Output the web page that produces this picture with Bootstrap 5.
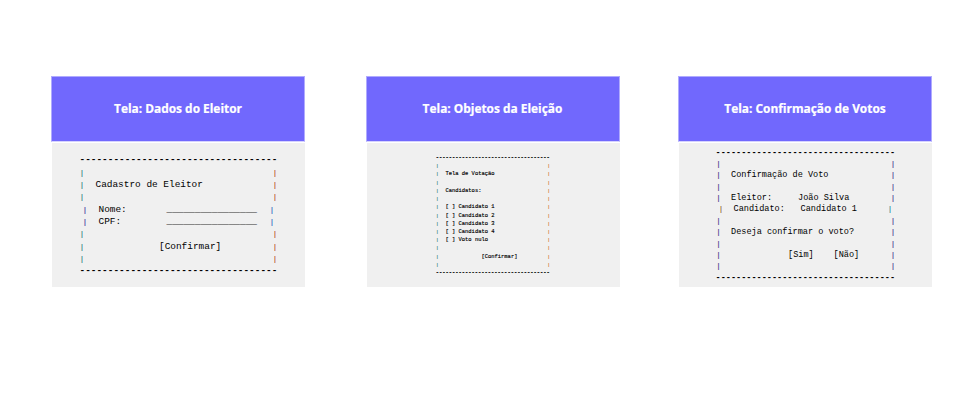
<!DOCTYPE html>
<html lang="pt-BR">
<head>
<meta charset="utf-8">
<title>Telas de votação</title>
<link href="https://cdn.jsdelivr.net/npm/bootstrap@5.3.0/dist/css/bootstrap.min.css" rel="stylesheet">
<style>
body{background:#fff;color:#000;overflow:hidden}
.board{padding:76px 48px 0 51px}
.screen{width:254px}
.screen-mid{margin-left:2px}
.screen-title{height:66px;background:#7168fd;border:1px solid #b0abfe;border-bottom-color:#d5d2ff;padding-bottom:2px;color:#fff;font:700 11.9px/16px "Open Sans",sans-serif;-webkit-text-stroke:.2px;box-sizing:border-box}
.screen-body{height:144px;margin:1px 0 0 1px;background:#f0f0f0}
.wire{font-family:"Courier New","Liberation Mono",monospace}
.line{display:flex;height:var(--lh);line-height:var(--lh);white-space:pre}
.rule{font-weight:700}
.edge{width:0;display:flex;justify-content:center;font-size:.78em;color:var(--c1);-webkit-text-stroke:.15px}
.edge.end{margin-left:auto;color:var(--c3)}
.w1{--lh:12.35px;--c1:#1c8078;--c3:#b8481c;font-size:9.43px;padding:11.2px 0 0 27.5px;width:225.5px}
.w2{--lh:8.22px;--c1:#287874;--c3:#d06828;font-size:5.43px;padding:11px 0 0 69.3px;width:183.3px}
.w2 .line{-webkit-text-stroke:.15px}
.w3{--lh:11.36px;--c1:#342c88;--c3:#342c88;font-size:8.55px;padding:4.7px 0 0 36.5px;width:216px}
.w1 .framed{padding:0 2.5px 0 2.5px}
.w1 .framed.shift{padding:0 5.5px;--c1:#342c98;--c3:#2060c0}
.w2 .framed{padding:0 1px 0 1.5px}
.w3 .framed{padding:0 2px 0 3px}
.w3 .framed.shift{padding:0 5px 0 5.5px;--c1:#80601c;--c3:#108890}
.t1{margin-left:13.5px}.t1c{margin-left:77px}.label1{width:68px}
.t2{margin-left:8.3px}.t2c{margin-left:44.3px}
.t3{margin-left:12.5px}.t3c{margin-left:69.5px}.label3{width:67px}.sim{width:45.5px}
</style>
<script src="https://cdn.jsdelivr.net/npm/bootstrap@5.3.0/dist/js/bootstrap.bundle.min.js"></script>
</head>
<body>
<main class="board d-flex justify-content-between">
<section class="screen">
<h2 class="screen-title d-flex align-items-center justify-content-center m-0">Tela: Dados do Eleitor</h2>
<div class="screen-body"><div class="wire w1">
<div class="line rule">-----------------------------------</div>
<div class="line framed"><span class="edge">|</span><span class="edge end">|</span></div>
<div class="line framed"><span class="edge">|</span><span class="t1">Cadastro de Eleitor</span><span class="edge end">|</span></div>
<div class="line framed"><span class="edge">|</span><span class="edge end">|</span></div>
<div class="line framed shift"><span class="edge">|</span><span class="t1 label1">Nome:</span><span>________________</span><span class="edge end">|</span></div>
<div class="line framed shift"><span class="edge">|</span><span class="t1 label1">CPF:</span><span>________________</span><span class="edge end">|</span></div>
<div class="line framed"><span class="edge">|</span><span class="edge end">|</span></div>
<div class="line framed"><span class="edge">|</span><span class="t1c">[Confirmar]</span><span class="edge end">|</span></div>
<div class="line framed"><span class="edge">|</span><span class="edge end">|</span></div>
<div class="line rule">-----------------------------------</div>
</div></div>
</section>
<section class="screen screen-mid">
<h2 class="screen-title d-flex align-items-center justify-content-center m-0">Tela: Objetos da Eleição</h2>
<div class="screen-body"><div class="wire w2">
<div class="line rule">-----------------------------------</div>
<div class="line framed"><span class="edge">|</span><span class="edge end">|</span></div>
<div class="line framed"><span class="edge">|</span><span class="t2">Tela de Votação</span><span class="edge end">|</span></div>
<div class="line framed"><span class="edge">|</span><span class="edge end">|</span></div>
<div class="line framed"><span class="edge">|</span><span class="t2">Candidatos:</span><span class="edge end">|</span></div>
<div class="line framed"><span class="edge">|</span><span class="edge end">|</span></div>
<div class="line framed"><span class="edge">|</span><span class="t2">[ ] Candidato 1</span><span class="edge end">|</span></div>
<div class="line framed"><span class="edge">|</span><span class="t2">[ ] Candidato 2</span><span class="edge end">|</span></div>
<div class="line framed"><span class="edge">|</span><span class="t2">[ ] Candidato 3</span><span class="edge end">|</span></div>
<div class="line framed"><span class="edge">|</span><span class="t2">[ ] Candidato 4</span><span class="edge end">|</span></div>
<div class="line framed"><span class="edge">|</span><span class="t2">[ ] Voto nulo</span><span class="edge end">|</span></div>
<div class="line framed"><span class="edge">|</span><span class="edge end">|</span></div>
<div class="line framed"><span class="edge">|</span><span class="t2c">[Confirmar]</span><span class="edge end">|</span></div>
<div class="line framed"><span class="edge">|</span><span class="edge end">|</span></div>
<div class="line rule">-----------------------------------</div>
</div></div>
</section>
<section class="screen">
<h2 class="screen-title d-flex align-items-center justify-content-center m-0">Tela: Confirmação de Votos</h2>
<div class="screen-body"><div class="wire w3">
<div class="line rule">-----------------------------------</div>
<div class="line framed"><span class="edge">|</span><span class="edge end">|</span></div>
<div class="line framed"><span class="edge">|</span><span class="t3">Confirmação de Voto</span><span class="edge end">|</span></div>
<div class="line framed"><span class="edge">|</span><span class="edge end">|</span></div>
<div class="line framed"><span class="edge">|</span><span class="t3 label3">Eleitor:</span><span>João Silva</span><span class="edge end">|</span></div>
<div class="line framed shift"><span class="edge">|</span><span class="t3 label3">Candidato:</span><span>Candidato 1</span><span class="edge end">|</span></div>
<div class="line framed"><span class="edge">|</span><span class="edge end">|</span></div>
<div class="line framed"><span class="edge">|</span><span class="t3">Deseja confirmar o voto?</span><span class="edge end">|</span></div>
<div class="line framed"><span class="edge">|</span><span class="edge end">|</span></div>
<div class="line framed"><span class="edge">|</span><span class="t3c sim">[Sim]</span><span>[Não]</span><span class="edge end">|</span></div>
<div class="line framed"><span class="edge">|</span><span class="edge end">|</span></div>
<div class="line rule">-----------------------------------</div>
</div></div>
</section>
</main>
</body>
</html>
